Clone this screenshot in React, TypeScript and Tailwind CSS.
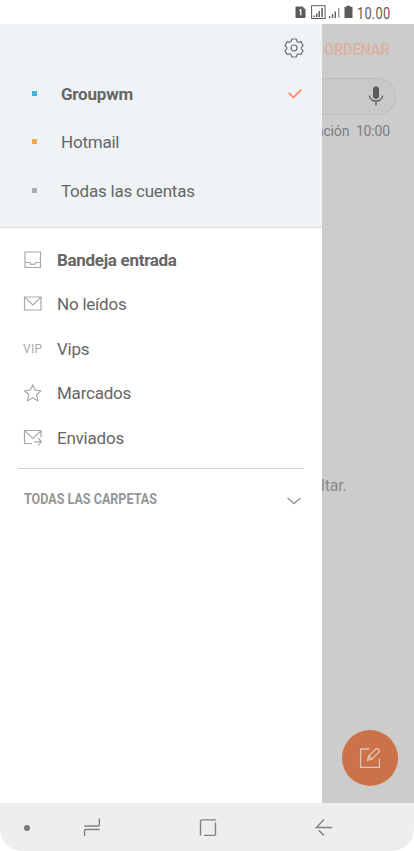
import type { ReactNode } from "react";

const accounts = [
  { name: "Groupwm", dot: "bg-[#43b1dc]", active: true },
  { name: "Hotmail", dot: "bg-[#f0a846]", active: false },
  { name: "Todas las cuentas", dot: "bg-[#acacac]", active: false },
];

function Icon({ children, className = "" }: { children: ReactNode; className?: string }) {
  return (
    <svg viewBox="0 0 20 20" fill="none" stroke="currentColor" strokeWidth="1.2" className={`block size-5 shrink-0 ${className}`}>
      {children}
    </svg>
  );
}

const folders: { name: string; icon: ReactNode; active?: boolean }[] = [
  {
    name: "Bandeja entrada",
    active: true,
    icon: (
      <Icon>
        <path d="M2 2h15.5v15.5H2zM2 12.5h4.7l1.2 1.8h3.6l1.3-1.8h4.7" />
      </Icon>
    ),
  },
  {
    name: "No leídos",
    icon: (
      <Icon>
        <path d="M1.5 3H18v13H1.5zM1.8 3.4l8 7.5 8-7.5" />
      </Icon>
    ),
  },
  { name: "Vips", icon: <span className="block w-5 text-[12px] leading-5 tracking-[0.3px]">VIP</span> },
  {
    name: "Marcados",
    icon: (
      <Icon>
        <path d="M9.7 1.7l2.4 5.5 5.9.6-4.4 4 1.4 6.1-5.3-3.1-5.3 3.1 1.4-6.1-4.4-4 5.9-.6z" strokeLinejoin="round" />
      </Icon>
    ),
  },
  {
    name: "Enviados",
    icon: (
      <Icon>
        <path d="M9 15.5H1.5v-13H18v7M1.8 2.9l8 7.5 8-7.5M11 13.8h7M15 10.2l3.5 3.6-3.5 3.6" />
      </Icon>
    ),
  },
];

function StatusBar() {
  return (
    <div className="flex h-6 items-center pl-[295px] text-[#5c5c5c]">
      <svg viewBox="0 0 60 14" className="block h-3.5 w-[60px] shrink-0" fill="currentColor">
        <path d="M1.5 1.5h6l3 3V12q0 1-1 1h-8q-1 0-1-1V2.5q0-1 1-1z" />
        <path d="M4.3 5.6l1.5-.9v5.6" fill="none" stroke="#fff" strokeWidth="1.3" />
        <rect x="16.6" y="0.7" width="13.5" height="12.8" fill="none" stroke="currentColor" strokeWidth="1" />
        <path d="M18.5 10.5h1.5V12h-1.5zM21 8.5h1.5V12H21zM23.5 6h1.5v6h-1.5zM26.3 3h1.5v9h-1.5z" />
        <path d="M34 11h1.3v2H34zM36.8 9h1.4v4h-1.4zM39.6 6.5H41V13h-1.4z" />
        <path d="M43 3h1.5v10H43z" opacity=".6" />
        <path d="M51.5 0.7h4V2h2v11h-8V2h2z" />
      </svg>
      <span className="mt-[3px] ml-[2px] origin-left scale-x-[0.8] text-[16px] leading-6 tracking-[0.3px]">10.00</span>
    </div>
  );
}

function Drawer() {
  return (
    <aside className="flex w-[322px] shrink-0 flex-col bg-white">
      <div className="h-[204px] border-b border-[#dbdee0] bg-[#eff3f6]">
        <div className="flex h-[46px] justify-end pt-[14px] pr-[18px] text-[#707070]">
          <svg viewBox="0 0 20 20" className="block size-5" fill="none" stroke="currentColor" strokeWidth="1.2" strokeLinejoin="round">
            <circle cx="10" cy="10" r="3" />
            <path d="M7.7 1h4.6l.7 2.5 1.4.8 2.5-.7 2.2 3.9-1.8 1.8v1.5l1.8 1.8-2.2 3.9-2.5-.7-1.4.8-.7 2.4H7.7L7 16.6l-1.4-.8-2.5.7-2.2-3.9 1.8-1.8V9.3L.9 7.5l2.2-3.9 2.5.7L7 3.5z" />
          </svg>
        </div>
        {accounts.map((account) => (
          <div key={account.name} className="flex h-[48.3px] items-center pr-5 pl-8 text-[#666]">
            <span className={`mb-px size-[5px] ${account.dot}`} />
            <span className={`ml-6 text-[17px] leading-6 tracking-[-0.22px] ${account.active ? "font-bold" : ""}`}>
              {account.name}
            </span>
            {account.active && (
              <svg viewBox="0 0 14 10" className="mb-px ml-auto block h-2.5 w-3.5" fill="none" stroke="#ff906a" strokeWidth="1.9">
                <path d="M.8 4l4.6 4.4L13.2.8" />
              </svg>
            )}
          </div>
        ))}
      </div>
      <nav className="mx-[18px] border-b border-[#d2d2d2] pt-[9.5px] pb-2">
        {folders.map((folder) => (
          <div key={folder.name} className="flex h-[44.5px] items-center pl-[5px] text-[#a9a9a9]">
            {folder.icon}
            <span
              className={`ml-[14px] text-[17px] leading-6 text-[#666] ${folder.active ? "font-bold tracking-[-0.3px]" : "tracking-[-0.22px]"}`}
            >
              {folder.name}
            </span>
          </div>
        ))}
      </nav>
      <div className="flex h-[60px] items-center justify-between pr-[21px] pl-6 text-[#969696]">
        <span className="mt-0.5 origin-left scale-x-[0.865] text-[14.5px] font-bold whitespace-nowrap">TODAS LAS CARPETAS</span>
        <svg viewBox="0 0 14 8" className="mt-1 block h-2 w-3.5" fill="none" stroke="currentColor" strokeWidth="1.5">
          <path d="M.6 1L7 6.6 13.4 1" />
        </svg>
      </div>
    </aside>
  );
}

function Inbox() {
  return (
    <section className="flex min-w-0 flex-1 flex-col overflow-hidden bg-[#ccc] text-[#7d7d7d]">
      <div className="flex h-[54px] items-center pl-[2px] text-[#d8b3a3]">
        <span className="mb-px origin-left scale-x-[0.87] text-[16.5px] font-bold">ORDENAR</span>
      </div>
      <div className="flex h-[37px] w-[74px] items-center justify-end rounded-r-full border border-l-0 border-[#bdbdbd] bg-[#c9c9c9] pr-[11px] text-[#5b5b5b]">
        <svg viewBox="0 0 16 20" className="mb-px block h-5 w-4" fill="none" stroke="currentColor" strokeWidth="1.3">
          <rect x="5" y="0.5" width="6" height="12.3" rx="2.5" fill="currentColor" stroke="none" />
          <path d="M1.5 9.5c0 7.3 13 7.3 13 0M8 15v4.5" />
        </svg>
      </div>
      <div className="flex h-8 w-[68px] justify-end pt-[6px] text-[14px] leading-5 tracking-[-0.15px] whitespace-pre">{"ación  10:00"}</div>
      <p className="mt-[329px] -ml-px w-[25px] self-start text-[16px] leading-5 tracking-[-0.2px] text-[#8b8b8b]">ltar.</p>
      <button className="mt-auto mr-4 mb-[17px] flex size-14 items-center justify-center self-end rounded-full bg-[#cc7248] text-[#e0c5b6]">
        <svg viewBox="0 0 22 22" className="mr-px block size-[22px]" fill="none" stroke="currentColor" strokeWidth="1.3">
          <path d="M10.5 2H1.6v18.3h18.8v-8.8M8.6 13.3l1-4.3 7.2-7c1.5-1.4 4.6 1.4 3.1 3.1l-7.1 7.1zM9.6 9l3.2 3.2" />
        </svg>
      </button>
    </section>
  );
}

function NavigationBar() {
  return (
    <div className="flex h-12 items-center rounded-b-[22px] bg-[#eee] pl-6 text-[#808080]">
      <span className="mt-0.5 size-[6px] rounded-full bg-[#777]" />
      <Icon className="ml-[52px]">
        <path d="M2.3 9h14q1 0 1-1V1.5M17.6 12.5h-14q-1 0-1 1V19" strokeWidth="1.4" />
      </Icon>
      <Icon className="ml-[96px]">
        <path d="M2.5 18.5v-14q0-1.6 1.6-1.6H18M17.5 5.5V17q0 1.4-1.4 1.4H6" strokeWidth="1.4" />
      </Icon>
      <Icon className="ml-[96px]">
        <path d="M18 10.5H2.4l7.5-8M4.8 13.2l5.1 5.2" strokeWidth="1.4" />
      </Icon>
    </div>
  );
}

export default function App() {
  return (
    <main className="flex h-[851px] w-[414px] flex-col overflow-hidden bg-white font-[Roboto,sans-serif]">
      <StatusBar />
      <div className="flex min-h-0 flex-1">
        <Drawer />
        <Inbox />
      </div>
      <NavigationBar />
    </main>
  );
}
